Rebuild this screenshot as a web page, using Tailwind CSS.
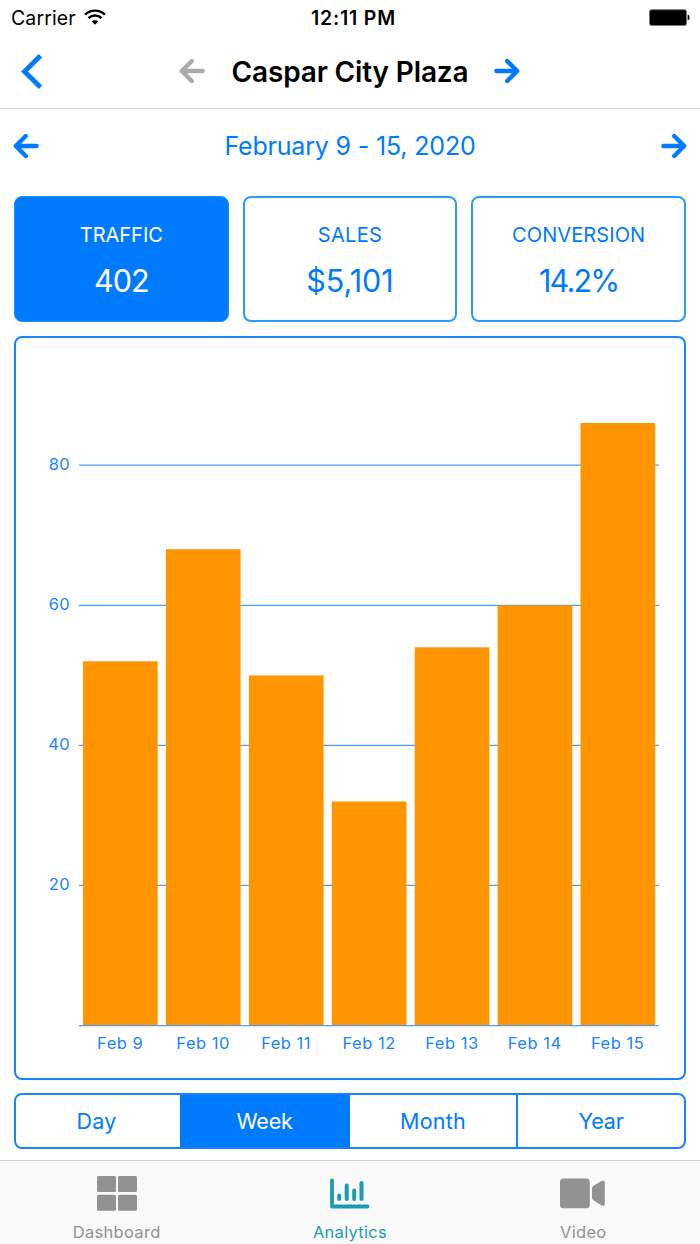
<!DOCTYPE html>
<html lang="en">
<head>
  <meta charset="UTF-8" />
  <meta name="viewport" content="width=device-width, initial-scale=1.0" />
  <title>Analytics</title>
  <script src="https://cdn.jsdelivr.net/npm/@tailwindcss/browser@4"></script>
</head>
<body class="bg-white font-[Inter,sans-serif] text-[#007aff]">
  <div class="flex flex-col w-[700px] h-[1244px] overflow-hidden">

    <!-- Status bar -->
    <div class="grid grid-cols-3 items-center h-9 pl-[11px] pr-[10px] text-black text-[19.5px] leading-9">
      <div class="flex items-center gap-2">
        <span class="tracking-[0.1px]">Carrier</span>
        <svg class="w-[22px] h-[17px] -mt-[2px]" viewBox="0 0 22 17" fill="none" stroke="#000" stroke-width="2.4">
          <path d="M1.1 5.7a14 14 0 0 1 19.8 0" />
          <path d="M4.5 9.2a9.2 9.2 0 0 1 13 0" />
          <path d="M11 15.8l-3.2-3.3a4.6 4.6 0 0 1 6.4 0z" fill="#000" stroke="none" />
        </svg>
      </div>
      <span class="text-center font-semibold tracking-[0.8px] whitespace-nowrap pl-[6px]">12:11 PM</span>
      <svg class="justify-self-end w-[41px] h-[17px] -mt-px" viewBox="0 0 41 17">
        <rect x="0.5" y="0.7" width="37" height="15.8" rx="2" fill="#000" stroke="#777" />
        <path d="M38.600 5.600c2.600.6 2.600 5.400 0 6z" fill="#000" />
      </svg>
    </div>

    <!-- Nav bar -->
    <header class="relative flex items-center justify-center h-[73px] pr-[2px] pb-[2px] border-b border-[#cfcfcf]">
      <svg class="absolute left-[21px] top-[17px] w-[22px] h-[37px]" viewBox="0 0 22 37" fill="none" stroke="currentColor" stroke-width="4.8">
        <path d="M19.5 2.7L3.5 18.5l16 15.8" />
      </svg>
      <svg class="w-[26px] h-[26px] text-[#aaa]" viewBox="0 0 26 26" fill="none" stroke="currentColor" stroke-width="4.4" stroke-linecap="round" stroke-linejoin="round">
        <path d="M23.6 13H4M12.8 3L2.8 13l10 10" />
      </svg>
      <h1 class="w-[289px] pl-[2px] pt-[2px] text-center text-black text-[28px] font-semibold tracking-[-0.15px] whitespace-nowrap">Caspar City Plaza</h1>
      <svg class="w-[26px] h-[26px]" viewBox="0 0 26 26" fill="none" stroke="currentColor" stroke-width="4.4" stroke-linecap="round" stroke-linejoin="round">
        <path d="M2.4 13H22M13.2 3l10 10-10 10" />
      </svg>
    </header>

    <!-- Date range -->
    <div class="flex items-center justify-between h-[74px] px-[13px]">
      <svg class="w-[26px] h-[26px]" viewBox="0 0 26 26" fill="none" stroke="currentColor" stroke-width="4.4" stroke-linecap="round" stroke-linejoin="round">
        <path d="M23.6 13H4M12.8 3L2.8 13l10 10" />
      </svg>
      <span class="pt-[2px] text-[25px] tracking-[-0.17px]">February 9 - 15, 2020</span>
      <svg class="w-[26px] h-[26px]" viewBox="0 0 26 26" fill="none" stroke="currentColor" stroke-width="4.4" stroke-linecap="round" stroke-linejoin="round">
        <path d="M2.4 13H22M13.2 3l10 10-10 10" />
      </svg>
    </div>

    <main class="flex flex-col gap-[14px] px-[14px] pt-[13px]">
      <!-- Metrics -->
      <div class="grid grid-cols-3 gap-[14px] h-[126px] text-center">
        <button class="pt-[2px] rounded-lg border border-[#1a95ff] bg-[#007aff] text-white">
          <div class="text-[20px] leading-[30px]">TRAFFIC</div>
          <div class="mt-3 text-[30.5px] leading-[38px] tracking-[-0.9px]">402</div>
        </button>
        <button class="pt-[2px] rounded-lg border-2 border-[#2b9cff]">
          <div class="text-[20px] leading-[30px] tracking-[0.3px]">SALES</div>
          <div class="mt-3 text-[30.5px] leading-[38px]">$5,101</div>
        </button>
        <button class="pt-[2px] rounded-lg border-2 border-[#2b9cff]">
          <div class="text-[20px] leading-[30px] tracking-[0.1px]">CONVERSION</div>
          <div class="mt-3 text-[30.5px] leading-[38px] tracking-[-1.8px]">14.2%</div>
        </button>
      </div>

      <!-- Chart -->
      <div class="h-[744px] rounded-lg border-2 border-[#1a84ff]">
        <svg class="w-[668px] h-[740px]" viewBox="16 338 668 740">
          <g stroke="#4a9ff5" stroke-width="1.3">
            <path d="M79 465.200h580M79 605.300h580M79 745.400h580M79 885.400h580" />
          </g>
          <g fill="#ff9500">
            <rect x="83" y="661.3" width="74.7" height="364" />
            <rect x="165.9" y="549.2" width="74.7" height="476" />
            <rect x="248.9" y="675.4" width="74.7" height="350" />
            <rect x="331.8" y="801.5" width="74.7" height="224" />
            <rect x="414.7" y="647.3" width="74.7" height="378" />
            <rect x="497.6" y="605.3" width="74.7" height="420" />
            <rect x="580.5" y="423" width="74.7" height="602.3" />
          </g>
          <path d="M79 1025.600h580" stroke="#4a9ff5" stroke-width="1.3" />
          <g class="text-[16.5px]" fill="#1a84ff" text-anchor="end" letter-spacing="0.3">
            <text x="69.9" y="469.5">80</text>
            <text x="69.9" y="609.6">60</text>
            <text x="69.9" y="749.7">40</text>
            <text x="69.9" y="889.8">20</text>
          </g>
          <g class="text-[16.5px]" fill="#1a84ff" text-anchor="middle" letter-spacing="0.5">
            <text x="120.2" y="1049">Feb 9</text>
            <text x="203.1" y="1049">Feb 10</text>
            <text x="286.1" y="1049">Feb 11</text>
            <text x="369.1" y="1049">Feb 12</text>
            <text x="451.9" y="1049">Feb 13</text>
            <text x="534.7" y="1049">Feb 14</text>
            <text x="617.6" y="1049">Feb 15</text>
          </g>
        </svg>
      </div>

      <!-- Period switch -->
      <div class="flex -mt-px h-[56px] rounded-lg border-2 border-[#1a84ff] overflow-hidden text-[21.5px]">
        <button class="w-[164px] pr-[3px] tracking-[0.2px]">Day</button>
        <button class="w-[170px] pr-px bg-[#007aff] text-white tracking-[-0.2px]">Week</button>
        <button class="w-[166px] tracking-[0.2px]">Month</button>
        <button class="flex-1 border-l-2 border-[#1a84ff] tracking-[-0.2px]">Year</button>
      </div>
    </main>

    <!-- Tab bar -->
    <nav class="grid grid-cols-3 mt-auto h-[84px] border-t border-[#cfcfcf] bg-[#f9f9f9] text-[16.5px] text-[#929292] tracking-[0.3px]">
      <a class="flex flex-col items-center">
        <svg class="mt-[15px] w-[40px] h-[35px]" viewBox="0 0 40 35" fill="currentColor">
          <rect width="19" height="16" rx="1.5" />
          <rect x="21" width="19" height="16" rx="1.5" />
          <rect y="18.7" width="19" height="16" rx="1.5" />
          <rect x="21" y="18.7" width="19" height="16" rx="1.5" />
        </svg>
        <span class="mt-[9px] leading-6">Dashboard</span>
      </a>
      <a class="flex flex-col items-center text-[#1d9bb2]">
        <svg class="mt-[15px] w-[40px] h-[35px]" viewBox="0 0 40 35" fill="none" stroke="currentColor" stroke-width="4" stroke-linecap="round" stroke-linejoin="round">
          <path d="M2 4.500v26h35.500" stroke-width="3.8" />
          <path d="M9.200 19.500v3.500M16.700 9.500v13.500M24.200 14.500v8.500M31.500 7v16" />
        </svg>
        <span class="mt-[9px] leading-6">Analytics</span>
      </a>
      <a class="flex flex-col items-center">
        <svg class="mt-[15px] w-[46px] h-[35px]" viewBox="0 0 46 35" fill="currentColor">
          <rect y="2.5" width="29.8" height="29.7" rx="3.5" />
          <path d="M32 12.500q0-1.800 1.500-2.800l8-4.700q3.300-1.300 3.300 1.500v21.500q0 2.800-3.300 1.500l-8-5.200q-1.500-1-1.500-2.500z" />
        </svg>
        <span class="mt-[9px] leading-6">Video</span>
      </a>
    </nav>
  </div>
</body>
</html>
